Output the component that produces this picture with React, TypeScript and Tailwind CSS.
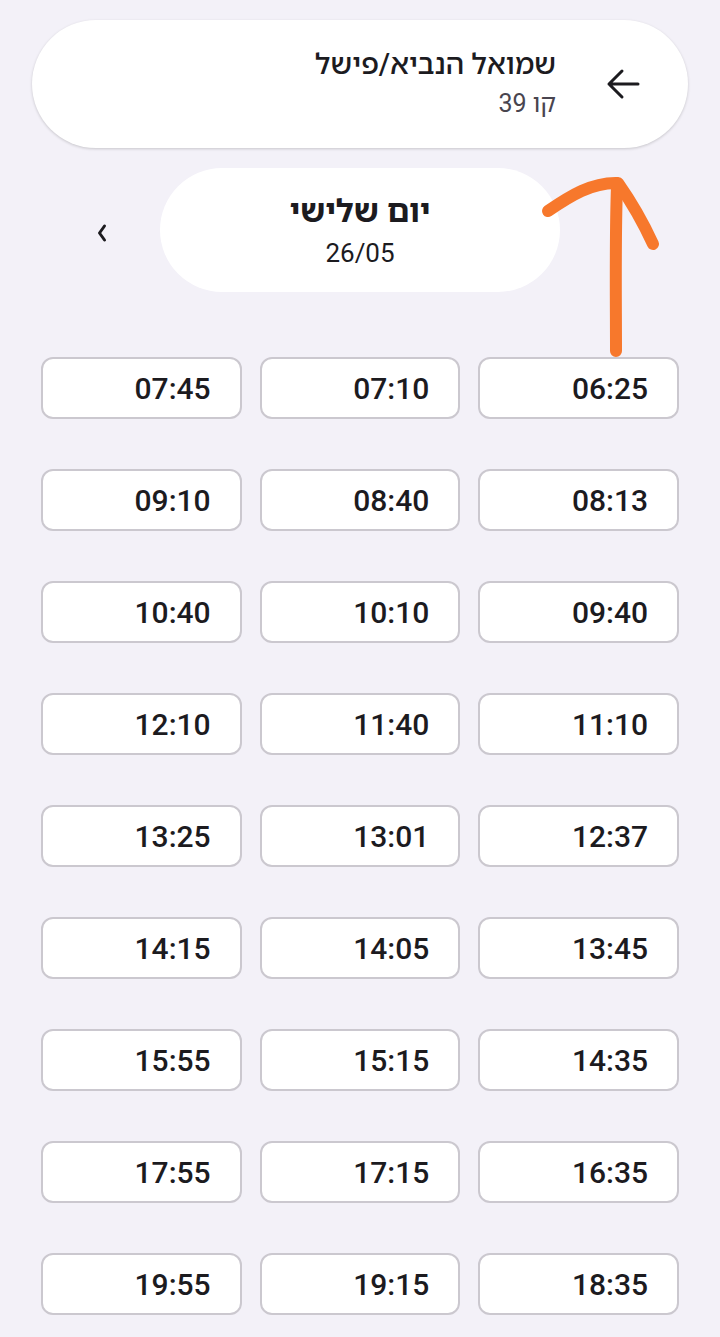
import React from 'react';

const rows: string[][] = [
  ['06:25', '07:10', '07:45'],
  ['08:13', '08:40', '09:10'],
  ['09:40', '10:10', '10:40'],
  ['11:10', '11:40', '12:10'],
  ['12:37', '13:01', '13:25'],
  ['13:45', '14:05', '14:15'],
  ['14:35', '15:15', '15:55'],
  ['16:35', '17:15', '17:55'],
  ['18:35', '19:15', '19:55'],
];

const font = { fontFamily: 'Roboto, "Noto Sans Hebrew", "DejaVu Sans", sans-serif' };

function Chevron({ dir }: { dir: 'left' | 'right' }) {
  return (
    <svg width="10" height="20" viewBox="0 0 10 20" className="mt-1.5 text-[#1c1b1f]">
      <path
        d={dir === 'left' ? 'M7.5 3 L2.5 10 L7.5 17' : 'M2.5 3 L7.5 10 L2.5 17'}
        fill="none"
        stroke="currentColor"
        strokeWidth="3"
        strokeLinecap="round"
        strokeLinejoin="round"
      />
    </svg>
  );
}

export default function App() {
  const times = rows.flat();

  return (
    <div dir="rtl" style={font} className="relative min-h-[1337px] bg-[#f3f1f8] pt-5 text-[#1c1b1f]">
      {/* header */}
      <div className="mx-8 flex h-[128px] items-center gap-[50px] rounded-full bg-white pr-12 shadow-[0_1px_3px_rgba(0,0,0,0.18)]">
        <svg width="34" height="32" viewBox="0 0 34 32">
          <path d="M32 16 H3 M16 3 L3 16 L16 29" fill="none" stroke="#1c1b1f" strokeWidth="3" strokeLinecap="round" strokeLinejoin="round" />
        </svg>
        <div className="flex flex-col">
          <span className="text-[29px] font-medium leading-[40px]">שמואל הנביא/פישל</span>
          <span className="text-[25px] leading-[40px] text-[#49454f]">קו 39</span>
        </div>
      </div>

      {/* day selector */}
      <div className="mt-5 flex items-center justify-center gap-[53px]">
        <Chevron dir="right" />
        <div className="flex h-[124px] w-[400px] flex-col items-center justify-center rounded-full bg-white pt-1">
          <span className="text-[32px] font-bold leading-[42px]">יום שלישי</span>
          <span className="text-[26px] leading-[42px] text-[#1c1b1f]">26/05</span>
        </div>
        <Chevron dir="left" />
      </div>

      {/* times */}
      <div className="mt-[65px] grid grid-cols-3 gap-x-[18px] gap-y-[50px] px-[41px]">
        {times.map((t) => (
          <button
            key={t}
            className="flex h-[62px] items-center rounded-xl border-2 border-[#cbc8cf] bg-white pr-[29px] text-[30px] font-medium text-[#1c1b1f]"
          >
            {t}
          </button>
        ))}
      </div>

      {/* hand-drawn annotation */}
      <svg className="pointer-events-none absolute left-0 top-0" width="720" height="400" viewBox="0 0 720 400">
        <g fill="none" stroke="#f7782c" strokeWidth="12" strokeLinecap="round" strokeLinejoin="round">
          <path d="M616 351 C616 300 615 240 617 186" />
          <path d="M548 211 C570 196 592 182 618 183 C630 200 642 220 653 244" />
        </g>
      </svg>
    </div>
  );
}
